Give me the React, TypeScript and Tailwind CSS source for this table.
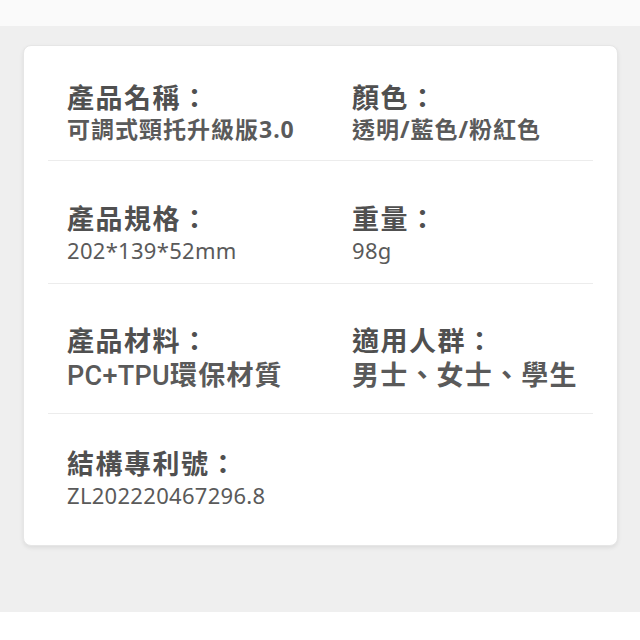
import React from "react";

type Spec = { label: string; value: React.ReactNode; big?: boolean; latin?: boolean };

const rows: { h: string; pt: string; last?: boolean; items: Spec[] }[] = [
  {
    h: "h-[115px]",
    pt: "pt-[36px]",
    items: [
      { label: "產品名稱：", value: "可調式頸托升級版3.0" },
      { label: "顏色：", value: "透明/藍色/粉紅色" },
    ],
  },
  {
    h: "h-[123px]",
    pt: "pt-[42px]",
    items: [
      { label: "產品規格：", value: "202*139*52mm", latin: true },
      { label: "重量：", value: "98g", latin: true },
    ],
  },
  {
    h: "h-[130px]",
    pt: "pt-[41px]",
    items: [
      {
        label: "產品材料：",
        value: (
          <>
            <span className="font-medium tracking-[0.3px]" style={{ fontFamily: "Roboto, sans-serif" }}>
              PC+TPU
            </span>
            環保材質
          </>
        ),
        big: true,
      },
      { label: "適用人群：", value: "男士、女士、學生", big: true },
    ],
  },
  {
    h: "h-[133px]",
    pt: "pt-[34px]",
    last: true,
    items: [{ label: "結構專利號：", value: "ZL202220467296.8", latin: true }],
  },
];

function Field({ spec }: { spec: Spec }) {
  let valueCls = "mt-[3px] text-[23px] leading-[27px] font-bold tracking-[1px]";
  if (spec.big) valueCls = "mt-[3px] text-[27px] leading-[31px] font-bold tracking-[1.2px]";
  if (spec.latin) valueCls = "mt-[4px] text-[22px] leading-[24px] font-normal tracking-[0.3px]";
  return (
    <div className="flex flex-col whitespace-nowrap">
      <div className="text-[27px] leading-[31px] font-bold tracking-[1.5px] text-[#505050]">{spec.label}</div>
      <div className={valueCls + " text-[#5a5a5a]"}>{spec.value}</div>
    </div>
  );
}

export default function App() {
  return (
    <div
      className="flex h-[640px] w-[640px] flex-col bg-white"
      style={{ fontFamily: '"Noto Sans", "Noto Sans CJK TC", sans-serif' }}
    >
      <div className="h-[26px] bg-[#fafafa]" />
      <div className="flex h-[586px] flex-col bg-[#efefef] px-[23px] pt-[19px]">
        <div className="h-[501px] w-[595px] rounded-[8px] border border-[#e6e6e6] bg-white px-[24px] shadow-[0_2px_4px_rgba(0,0,0,0.08)]">
          {rows.map((row, i) => (
            <div
              key={i}
              className={
                "flex px-[19px] " + row.h + " " + row.pt + (row.last ? "" : " border-b border-[#ececec]")
              }
            >
              <div className="w-[285px] shrink-0">
                <Field spec={row.items[0]} />
              </div>
              {row.items[1] && <Field spec={row.items[1]} />}
            </div>
          ))}
        </div>
      </div>
      <div className="flex-1 bg-white" />
    </div>
  );
}
